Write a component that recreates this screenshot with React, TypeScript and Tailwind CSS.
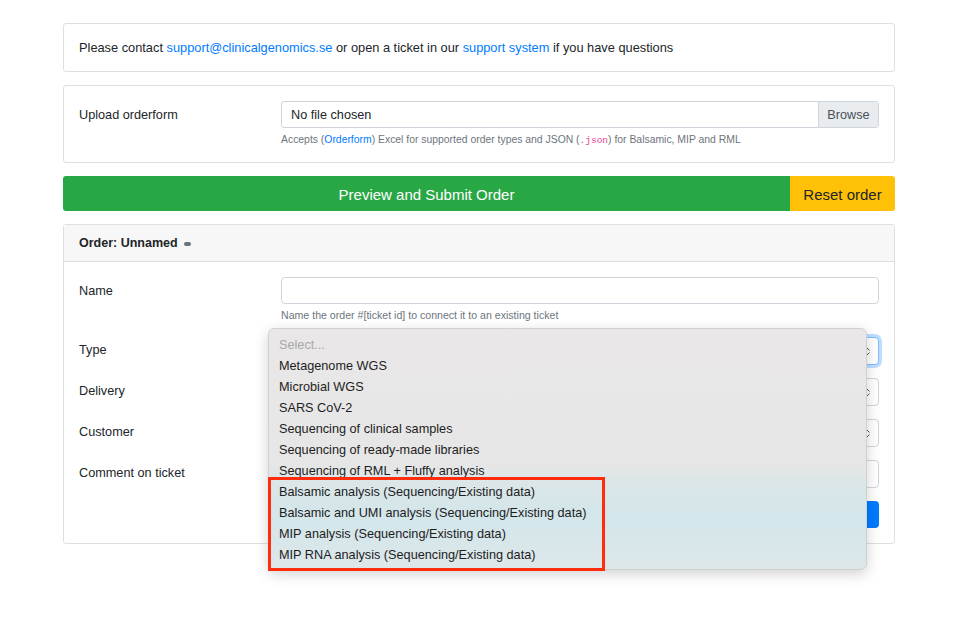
import { useState } from "react";

const typeOptions = [
  "Metagenome WGS",
  "Microbial WGS",
  "SARS CoV-2",
  "Sequencing of clinical samples",
  "Sequencing of ready-made libraries",
  "Sequencing of RML + Fluffy analysis",
  "Balsamic analysis (Sequencing/Existing data)",
  "Balsamic and UMI analysis (Sequencing/Existing data)",
  "MIP analysis (Sequencing/Existing data)",
  "MIP RNA analysis (Sequencing/Existing data)",
];

const Chevrons = () => (
  <svg width="6" height="9" viewBox="0 0 6 9" className="text-gray-600">
    <path d="M0.5 3.5 L3 1 L5.5 3.5" fill="none" stroke="currentColor" strokeWidth="1" />
    <path d="M0.5 5.5 L3 8 L5.5 5.5" fill="none" stroke="currentColor" strokeWidth="1" />
  </svg>
);

const SelectBox = ({ focused }: { focused?: boolean }) => (
  <div
    className={
      focused
        ? "h-[28px] rounded-[4px] border border-[#80bdff] shadow-[0_0_0_3px_rgba(0,123,255,0.25)] bg-white flex items-center justify-end pr-[8px]"
        : "h-[28px] rounded-[4px] border border-[#ced4da] bg-white flex items-center justify-end pr-[8px]"
    }
  >
    <Chevrons />
  </div>
);

const App = () => {
  const [name, setName] = useState("");

  return (
    <div
      className="relative min-h-[623px] bg-white text-[#212529] pt-[23px] pl-[63px]"
      style={{ fontFamily: '"Liberation Sans", Arial, sans-serif' }}
    >
      <div className="w-[832px] flex flex-col gap-[13px]">
        <div className="h-[49px] border border-[#dfdfdf] rounded-[3px] px-[15px] pt-[1px] flex items-center text-[12.8px]">
          <span>
            Please contact{" "}
            <a className="text-[#007bff]">support@clinicalgenomics.se</a> or open a ticket in our{" "}
            <a className="text-[#007bff]">support system</a> if you have questions
          </span>
        </div>

        <div className="h-[78px] border border-[#dfdfdf] rounded-[3px] px-[15px] pt-[15px]">
          <div className="flex">
            <div className="w-[202px] h-[27px] pt-[2px] flex items-center text-[12.7px]">Upload orderform</div>
            <div className="flex-1">
              <div className="h-[27px] flex border border-[#ced4da] rounded-[3px] text-[12.7px]">
                <div className="flex-1 flex items-center pl-[9px] pt-[2px]">No file chosen</div>
                <div className="w-[60px] flex items-center justify-center pt-[2px] bg-[#e9ecef] border-l border-[#ced4da] text-[#495057]">
                  Browse
                </div>
              </div>
              <div className="mt-[5px] leading-[14px] text-[10.4px] text-[#6c757d]">
                Accepts (<span className="text-[#007bff]">Orderform</span>) Excel for supported order types and JSON (
                <span className="text-[#e83e8c] font-mono text-[9.5px]">.json</span>) for Balsamic, MIP and RML
              </div>
            </div>
          </div>
        </div>

        <div className="flex h-[35px] rounded-[3px] overflow-hidden text-[15px]">
          <button className="flex-1 bg-[#28a745] text-white pt-[3px]">Preview and Submit Order</button>
          <button className="w-[105px] bg-[#ffc107] text-[#212529] pt-[3px]">Reset order</button>
        </div>

        <div className="border border-[#dfdfdf] rounded-[3px]">
          <div className="h-[37px] bg-[#f7f7f7] border-b border-[#dfdfdf] px-[15px] pt-[1px] flex items-center gap-[6px] text-[12.5px] font-bold">
            Order: Unnamed
            <span className="w-[7px] h-[4px] rounded-full bg-[#6c757d]" />
          </div>
          <div className="px-[15px] pt-[15px] pb-[15px] text-[12.7px]">
            <div className="flex mb-[15px]">
              <div className="w-[202px] h-[27px] pt-[2px] flex items-center">Name</div>
              <div className="flex-1">
                <input
                  className="w-full h-[27px] border border-[#ced4da] rounded-[4px] px-[8px] outline-none"
                  value={name}
                  onChange={(e: any) => setName(e.target.value)}
                />
                <div className="mt-[4px] leading-[14px] text-[10.6px] text-[#6c757d]">
                  Name the order #[ticket id] to connect it to an existing ticket
                </div>
              </div>
            </div>
            <div className="flex mb-[13px]">
              <div className="w-[202px] h-[28px] flex items-center">Type</div>
              <div className="flex-1">
                <SelectBox focused />
              </div>
            </div>
            <div className="flex mb-[13px]">
              <div className="w-[202px] h-[28px] flex items-center">Delivery</div>
              <div className="flex-1">
                <SelectBox />
              </div>
            </div>
            <div className="flex mb-[13px]">
              <div className="w-[202px] h-[28px] flex items-center">Customer</div>
              <div className="flex-1">
                <SelectBox />
              </div>
            </div>
            <div className="flex mb-[13px]">
              <div className="w-[202px] h-[28px] flex items-center">Comment on ticket</div>
              <div className="flex-1">
                <div className="h-[28px] border border-[#ced4da] rounded-[4px]" />
              </div>
            </div>
            <div className="flex">
              <div className="w-[202px]" />
              <button className="flex-1 h-[27px] rounded-[4px] bg-[#007bff] text-white">Submit</button>
            </div>
          </div>
        </div>
      </div>

      <div className="absolute left-[268px] top-[328px] w-[599px] h-[242px] rounded-[6px] border border-[#d0d0d0] shadow-[0_4px_14px_rgba(0,0,0,0.18)] bg-[linear-gradient(to_bottom,#e9e7e7_0%,#e7e6e6_56%,#dbe6e8_64%,#d3e6ea_78%,#dde7ea_100%)] pt-[6px] pl-[10px] text-[12.7px] text-[#1d1d1d]">
        <div className="h-[21px] leading-[21px] text-[#a8a8a8]">Select...</div>
        {typeOptions.map((opt, i) => (
          <div key={i} className="h-[21px] leading-[21px]">
            {opt}
          </div>
        ))}
      </div>
      <div className="absolute left-[268px] top-[477px] w-[337px] h-[94px] border-[3px] border-[#ff2d0d]" />
    </div>
  );
};

export default App;
